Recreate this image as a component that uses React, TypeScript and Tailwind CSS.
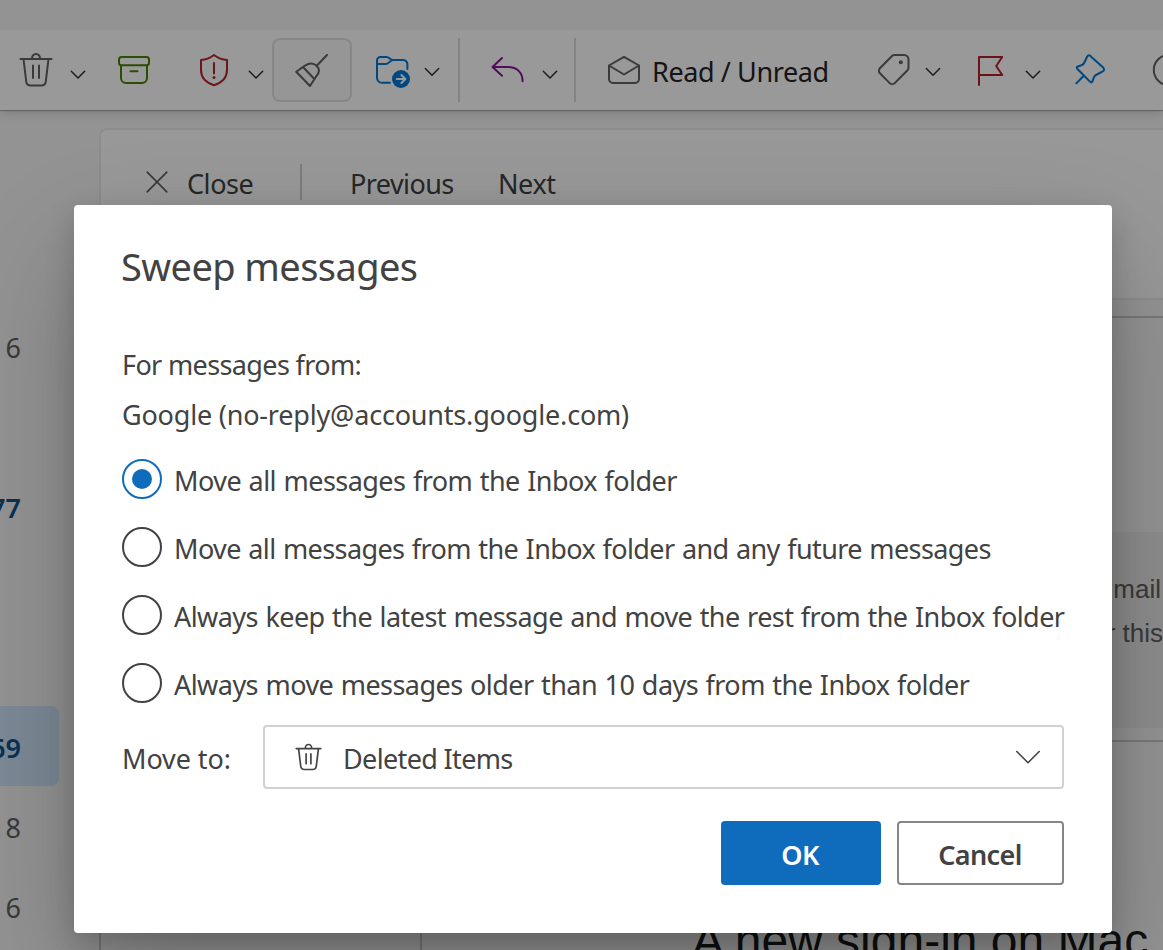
import type { ReactNode } from 'react'

function Glyph({ x, w, className, children }: { x: number; w: number; className: string; children: ReactNode }) {
  return (
    <svg
      width={w}
      height={40}
      viewBox={`${x} 50 ${w} 40`}
      fill="none"
      stroke="currentColor"
      strokeWidth={2}
      strokeLinecap="round"
      strokeLinejoin="round"
      className={`shrink-0 ${className}`}
    >
      {children}
    </svg>
  )
}

function Chevron({ low = true, className }: { low?: boolean; className: string }) {
  return (
    <Glyph x={0} w={16} className={`text-[#303030] ${className}`}>
      <path strokeWidth={1.5} d={low ? 'M1.3 71.3 8 78l6.7-6.7' : 'M1.3 68.5 8 75.2l6.7-6.7'} />
    </Glyph>
  )
}

function Trash({ className, size = 34 }: { className: string; size?: number }) {
  return (
    <svg
      width={size}
      height={(size * 36) / 34}
      viewBox="0 0 34 36"
      fill="none"
      stroke="currentColor"
      strokeWidth={size < 30 ? 2.1 : 2}
      strokeLinecap="round"
      strokeLinejoin="round"
      className={`shrink-0 ${className}`}
    >
      <path d="M1.500 7h31M13 6.500a4 4.600 0 0 1 8 0M4.500 7l2.700 22.300a4.600 4.600 0 0 0 4.600 4.100h10.400a4.600 4.600 0 0 0 4.600-4.100L29.500 7M14 13.500v12.500M20 13.500v12.500" />
    </svg>
  )
}

function Divider({ className }: { className: string }) {
  return <div className={`h-16 w-0.5 shrink-0 bg-[#dadada] ${className}`} />
}

function Toolbar() {
  return (
    <div className="relative z-10 flex h-20 items-center overflow-hidden bg-white">
      <Trash className="ml-[19px] text-[#616161]" />
      <Chevron className="ml-[17px]" />
      <Glyph x={117} w={34} className="ml-[31px] text-[#498205]">
        <rect x="119" y="57" width="30" height="8.300" rx="2.500" />
        <path d="M121 65.500v12.500a5 5 0 0 0 5 5h16a5 5 0 0 0 5-5V65.500M130.500 71.200h7" />
      </Glyph>
      <Glyph x={199} w={30} className="ml-12 text-[#b3262d]">
        <path d="M214 55c-4 3-8.500 4.700-13 5v10c0 7.500 4.500 12.500 13 15.200 8.500-2.700 13-7.700 13-15.200V60c-4.500-.3-9-2-13-5ZM214 63v10.500" />
        <circle cx="214" cy="77.600" r="1.500" fill="currentColor" stroke="none" />
      </Glyph>
      <Chevron className="ml-[19px]" />
      <div className="ml-2 flex h-16 w-20 shrink-0 items-center justify-center rounded-lg border-2 border-[#e2e2e2] bg-[#fafafa]">
        <Glyph x={295} w={34} className="text-[#616161]">
          <path d="m327 55-10.500 11M296.200 71.800 310 86l5.800-9c4.200-4.500 3.500-8.500.8-11.200-3.200-3-7.200-3-11.600-.2ZL305 65.600M303.500 67.500l11 11.700" />
        </Glyph>
      </div>
      <Glyph x={375} w={36} className="ml-[23px] text-[#0078d4]">
        <path d="M390 82.800h-8a5 5 0 0 1-5-5V60.500a3.500 3.500 0 0 1 3.500-3.500h6c2.800 0 3.600 3 6.200 3h10.500a4.200 4.200 0 0 1 4.200 4.200V69M377 64h9c3.500 0 3.800-4 7-4" />
        <circle cx="401" cy="79" r="9" fill="currentColor" stroke="none" />
        <path className="text-white" d="M396.800 79h8.400m-3.800-4 4 4-4 4" />
      </Glyph>
      <Chevron low={false} className="ml-[13px]" />
      <Divider className="ml-[18px]" />
      <Glyph x={491} w={34} className="ml-[31px] text-[#881798]">
        <path d="m502 58-9.500 9 9.500 8.700M493 67h15c9 0 14.600 5.500 14.600 14.300" />
      </Glyph>
      <Chevron className="ml-[17px]" />
      <Divider className="ml-4" />
      <Glyph x={607} w={34} className="ml-[31px] text-[#616161]">
        <path d="m609 65.500 15-8.700 15 8.700V79a4 4 0 0 1-4 4h-22a4 4 0 0 1-4-4V65.500Zm0 0 15 9 15-9" />
      </Glyph>
      <span className="ml-[11px] w-[179px] shrink-0 pt-[3px] tracking-[-0.4px] whitespace-nowrap text-[#242424]">Read / Unread</span>
      <Glyph x={877} w={33} className="ml-[46px] text-[#616161]">
        <path d="M894.500 55H904a4.500 4.500 0 0 1 4.500 4.500v8.300a3.500 3.500 0 0 1-1 2.400l-12.800 12.900a3.600 3.600 0 0 1-5 0l-9.800-9.800a3.600 3.600 0 0 1 0-5L892 56a3.500 3.500 0 0 1 2.500-1Z" />
        <circle cx="900.800" cy="62.200" r="2" fill="currentColor" stroke="none" />
      </Glyph>
      <Chevron low={false} className="ml-[15px]" />
      <Glyph x={977} w={27} className="ml-9 text-[#b3202a]">
        <path d="M979 85V57h23.200l-6 9 6 9H979" />
      </Glyph>
      <Chevron className="ml-[21px]" />
      <Glyph x={1074} w={32} className="ml-[33px] text-[#0078d4]">
        <path
          d="m1075.700 83 7-7.200M1090.500 56.300c-1.400-1.900-3-1.800-4 .1l-3 6.200c-.6 1.200-1.500 1.900-2.700 2.300l-3.500 1.200c-1.200.4-1.500 1.300-.7 2.200l13 13.200c.9.900 1.900.6 2.300-.6l1.300-3.700c.4-1.200 1.100-2 2.200-2.600l6.300-3.300c2-1 2.300-2.600.9-4.100Z"
          transform="translate(.6 .4)"
        />
      </Glyph>
      <Glyph x={1152} w={34} className="ml-[46px] text-[#616161]">
        <circle cx="1169" cy="70" r="15.200" />
      </Glyph>
    </div>
  )
}

const folders = [
  { count: '6', row: '' },
  { count: '', row: '' },
  { count: '77', row: 'font-semibold text-[#0f548c]' },
  { count: '', row: '' },
  { count: '', row: '' },
  { count: '69', row: 'rounded-r-lg bg-[#cfe4fa] font-semibold text-[#0f548c]' },
  { count: '8', row: '' },
  { count: '6', row: '' },
]

function Sidebar() {
  return (
    <div className="flex w-[99px] shrink-0 flex-col pt-[196px] text-[#616161]">
      {folders.map((f, i) => (
        <div key={i} className={`flex h-20 w-[59px] shrink-0 items-center justify-end pt-[3px] pr-[38px] ${f.row}`}>
          {f.count}
        </div>
      ))}
    </div>
  )
}

function ReadingArea() {
  return (
    <div className="flex min-w-0 grow flex-col pt-[18px]">
      <div className="h-[172px] shrink-0 rounded-tl-lg border-2 border-r-0 border-[#ececec] bg-[#fefefe] pt-[34px]">
        <div className="flex h-9 items-center pl-[44px] text-[#424242]">
          <svg width="24" height="24" viewBox="0 0 24 24" stroke="#616161" strokeWidth="1.7" strokeLinecap="round" className="shrink-0">
            <path d="m2.200 2.200 19.600 19.600m0-19.600L2.200 21.800" />
          </svg>
          <span className="ml-[18px] w-[70px] pt-[3px] tracking-[-0.45px]">Close</span>
          <div className="ml-[43px] h-9 w-0.5 bg-[#d1d1d1]" />
          <span className="ml-12 w-[110px] pt-[3px] tracking-[-0.58px]">Previous</span>
          <span className="ml-[38px] pt-[3px] tracking-[-0.4px]">Next</span>
        </div>
      </div>
      <div className="mt-4 flex grow border-t-2 border-l-2 border-[#c8c8c8]">
        <div className="w-[321px] shrink-0 border-r-2 border-[#c8c8c8]" />
        <div className="flex min-w-0 grow flex-col pt-[214px] font-['Liberation_Sans',Arial,sans-serif]">
          <div className="flex h-[196px] shrink-0 flex-col items-end overflow-hidden bg-[#ebebeb] pt-[35px] text-[26px] leading-[44px] whitespace-nowrap text-[#616161]">
            <div className="pr-0.5">mail</div>
            <div>for this</div>
          </div>
          <div className="mt-3 h-0.5 shrink-0 bg-[#cacaca]" />
          <div className="mt-[171px] pl-[270px] text-[48px] leading-[56px] whitespace-nowrap text-[#1b1b1b]">A new sign-in on Mac</div>
        </div>
      </div>
    </div>
  )
}

const options = [
  { label: 'Move all messages from the Inbox folder', tracking: 'tracking-[-0.54px]' },
  { label: 'Move all messages from the Inbox folder and any future messages', tracking: 'tracking-[-0.6px]' },
  { label: 'Always keep the latest message and move the rest from the Inbox folder', tracking: 'tracking-[-0.56px]' },
  { label: 'Always move messages older than 10 days from the Inbox folder', tracking: 'tracking-[-0.55px]' },
]

function SweepDialog() {
  return (
    <div
      role="dialog"
      className="h-[728px] w-[1038px] rounded bg-white px-12 pt-9 whitespace-nowrap text-[#424242] shadow-[0_51px_115px_rgba(0,0,0,0.22),0_10px_29px_rgba(0,0,0,0.18)]"
    >
      <h1 className="-ml-px text-[38px] leading-[50px] tracking-[-0.58px]">Sweep messages</h1>
      <p className="mt-14 tracking-[-0.63px]">For messages from:</p>
      <p className="mt-3.5 tracking-[-0.19px]">Google (no-reply@accounts.google.com)</p>
      <div className="mt-[26px] flex flex-col gap-7 [word-spacing:1px]">
        {options.map((o, i) => (
          <label key={o.label} className="flex h-10 items-center gap-3">
            <span
              className={`flex size-10 shrink-0 items-center justify-center rounded-full border-2 ${i === 0 ? 'border-[#0f6cbd]' : 'border-[#424242]'}`}
            >
              {i === 0 && <span className="size-5 rounded-full bg-[#0f6cbd]" />}
            </span>
            <span className={`pt-[3px] ${o.tracking}`}>{o.label}</span>
          </label>
        ))}
      </div>
      <div className="mt-[22px] flex h-16 items-center">
        <span className="w-[141px] shrink-0 pt-[3px] tracking-[-0.1px]">Move to:</span>
        <div className="flex h-16 grow items-center rounded border-2 border-[#d1d1d1] pr-[21px] pl-[30px]">
          <Trash size={27} className="text-[#424242]" />
          <span className="ml-[21px] grow pt-[3px] tracking-[-0.65px]">Deleted Items</span>
          <svg width="26" height="14" viewBox="0 0 26 14" fill="none" stroke="#424242" strokeWidth="1.6" strokeLinecap="round" strokeLinejoin="round">
            <path d="m1.800 1.500 11.200 11.200L24.200 1.500" />
          </svg>
        </div>
      </div>
      <div className="mt-8 flex justify-end gap-4 font-semibold">
        <button className="h-16 w-40 rounded bg-[#0f6cbd] pt-[3px] pr-0.5 tracking-[-0.6px] text-white">OK</button>
        <button className="h-16 w-[167px] rounded border-2 border-[#868686] pt-[3px] pr-px tracking-[-0.6px]">Cancel</button>
      </div>
    </div>
  )
}

export default function App() {
  return (
    <div className="relative h-[950px] w-[1163px] overflow-hidden bg-[#f6f6f6] font-['Noto_Sans','Open_Sans',sans-serif] text-[27px] leading-9">
      <div className="flex h-full flex-col">
        <div className="h-[30px] shrink-0 border-b-2 border-[#f9f9f9]" />
        <div className="relative z-10 shrink-0 shadow-[0_1px_1px_rgba(0,0,0,0.25),0_4px_10px_rgba(0,0,0,0.14)]">
          <Toolbar />
        </div>
        <div className="flex min-h-0 grow overflow-hidden">
          <Sidebar />
          <ReadingArea />
        </div>
      </div>
      <div className="absolute inset-0 z-20 bg-black/40 pt-[205px] pl-[74px]">
        <SweepDialog />
      </div>
    </div>
  )
}
